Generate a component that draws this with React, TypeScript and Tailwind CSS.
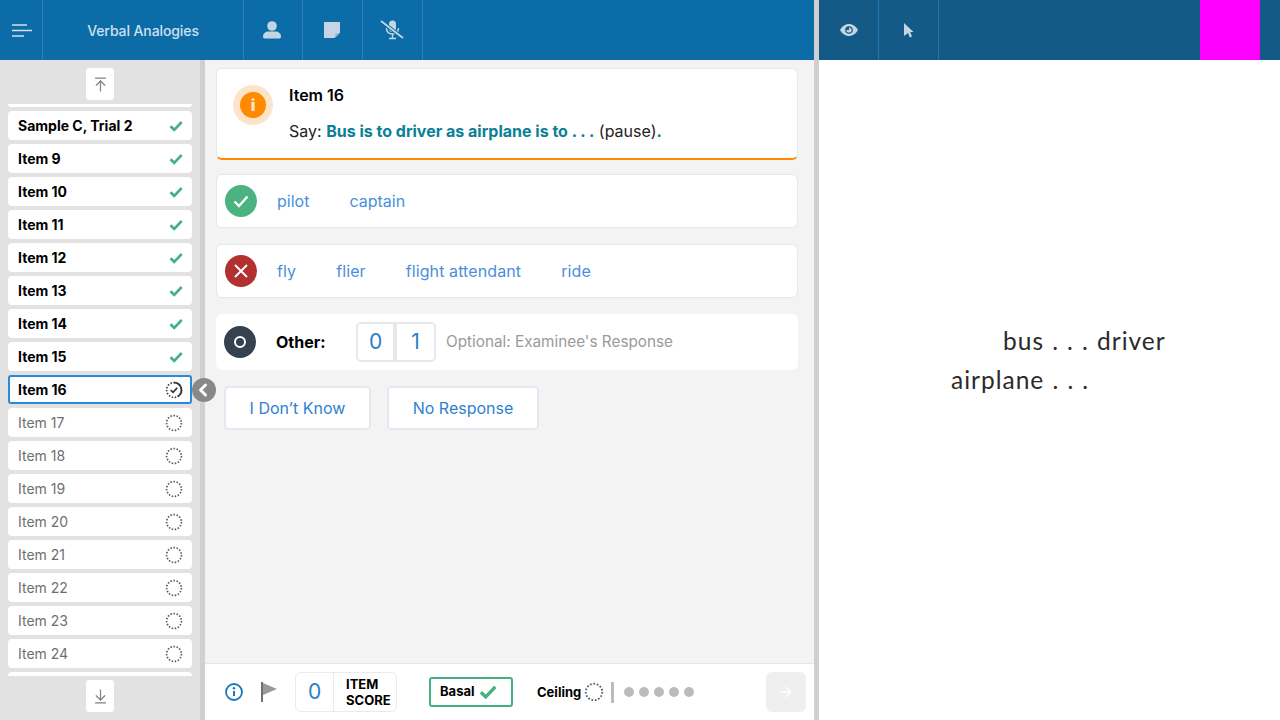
import { ChevronLeft, ArrowRight, ArrowUpToLine, ArrowDownToLine } from 'lucide-react';

const doneItems = ['Sample C, Trial 2', 'Item 9', 'Item 10', 'Item 11', 'Item 12', 'Item 13', 'Item 14', 'Item 15'];
const pendingItems = ['Item 17', 'Item 18', 'Item 19', 'Item 20', 'Item 21', 'Item 22', 'Item 23', 'Item 24'];
const wrongAnswers = ['fly', 'flier', 'flight attendant', 'ride'];

function DottedRing({ size = 18 }: { size?: number }) {
  return (
    <svg width={size} height={size} viewBox="0 0 18 18" fill="none">
      <circle cx="9" cy="9" r="7.4" stroke="#5c5c5c" strokeWidth="1.7" strokeDasharray="1.5 1.6" />
    </svg>
  );
}

function CurrentRing() {
  return (
    <svg width="18" height="18" viewBox="0 0 18 18" fill="none">
      <circle cx="9" cy="9" r="7.4" stroke="#444" strokeWidth="1.7" strokeDasharray="1.5 1.6" />
      <path d="M9 1.600A7.400 7.400 0 0 1 12.700 15.400" stroke="#333" strokeWidth="1.700" />
      <path d="M5.600 9l2.400 2.300 4.200-4.400" stroke="#333" strokeWidth="1.700" />
    </svg>
  );
}

function CheckMark({ size = 14 }: { size?: number }) {
  return (
    <svg width={size} height={size} viewBox="0 0 14 14" fill="none">
      <path d="M1.500 7.200l3.700 3.600L12.700 3" stroke="#45b080" strokeWidth="2.600" />
    </svg>
  );
}

function HeaderCell({ children, className }: { children: React.ReactNode; className: string }) {
  return <div className={`flex h-full items-center justify-center border-r border-[#2f7fb5] ${className}`}>{children}</div>;
}

function Row({ label, children, muted }: { label: string; children: React.ReactNode; muted?: boolean }) {
  return (
    <div className="flex h-[29px] shrink-0 items-center justify-between rounded-[4px] bg-white pl-[10px] pr-[9px]">
      <span className={`text-[14px] ${muted ? 'font-normal text-[#6f6f6f]' : 'font-bold text-black'}`}>{label}</span>
      {children}
    </div>
  );
}

export default function App() {
  return (
    <div className="flex h-[720px] w-[1280px] overflow-hidden bg-white font-['Inter',sans-serif]">
      <div className="flex w-[814px] shrink-0 flex-col">
        <header className="flex h-[60px] shrink-0 items-center bg-[#0b6ca8]">
          <HeaderCell className="w-[43px] pl-[2px]">
            <svg width="20" height="13" viewBox="0 0 20 13" fill="none" stroke="#cfe0ee" strokeWidth="1.500">
              <path d="M0 1h15M0 6.500h20M0 12h12" />
            </svg>
          </HeaderCell>
          <HeaderCell className="w-[201px]">
            <span className="text-[14px] font-medium tracking-[-0.1px] text-[#cfe0ee]">Verbal Analogies</span>
          </HeaderCell>
          <HeaderCell className="w-[59px] pr-[2px]">
            <svg width="18" height="18" viewBox="0 0 18 18" fill="#c5d5e4">
              <circle cx="9" cy="5" r="4.800" />
              <path d="M0 15.500c0-3.400 3-5 5.500-5h7c2.500 0 5.500 1.600 5.500 5 0 1.500-.8 2-2 2H2c-1.200 0-2-.5-2-2z" />
            </svg>
          </HeaderCell>
          <HeaderCell className="w-[60px] pr-[2px]">
            <svg width="16" height="16" viewBox="0 0 16 16">
              <path d="M0 0h16v10.500L10.500 16H0z" fill="#c5d5e4" />
              <path d="M11.500 15.500v-4h4z" fill="#8fb1cc" />
            </svg>
          </HeaderCell>
          <HeaderCell className="w-[60px] pr-[2px]">
            <svg width="24" height="20" viewBox="0 0 24 20" fill="none">
              <rect x="9" y="0.500" width="7" height="11.500" rx="3.500" fill="#c5d5e4" />
              <path d="M6.500 8c0 4 2.500 6 6 6s6-2 6-6" stroke="#c5d5e4" strokeWidth="1.400" />
              <path d="M12.500 14v4M9 18.500h7" stroke="#c5d5e4" strokeWidth="1.400" />
              <path d="M1 1l22 17" stroke="#0b6ca8" strokeWidth="3.600" />
              <path d="M1 1l22 17" stroke="#c5d5e4" strokeWidth="1.800" />
            </svg>
          </HeaderCell>
        </header>

        <div className="flex min-h-0 flex-1">
          <aside className="relative flex w-[205px] shrink-0 flex-col border-r-[5px] border-[#d0d0d0] bg-[#e2e2e2]">
            <div className="flex h-[44px] shrink-0 items-start justify-center pt-[8px]">
              <div className="flex h-[32px] w-[28px] items-center justify-center rounded-[3px] bg-white">
                <ArrowUpToLine size={17} strokeWidth={1.700} color="#808080" />
              </div>
            </div>
            <div className="mx-[8px] flex h-[572px] flex-col gap-[4px] overflow-hidden">
              <div className="h-[3px] shrink-0 rounded-b-[4px] bg-white" />
              {doneItems.map((item) => (
                <Row key={item} label={item}>
                  <CheckMark />
                </Row>
              ))}
              <div className="flex h-[29px] shrink-0 items-center justify-between rounded-[3px] border-2 border-[#2a8ad8] bg-white pl-[8px] pr-[7px]">
                <span className="text-[14px] font-bold text-black">Item 16</span>
                <CurrentRing />
              </div>
              {pendingItems.map((item) => (
                <Row key={item} label={item} muted>
                  <DottedRing />
                </Row>
              ))}
              <div className="h-[4px] shrink-0 rounded-t-[4px] bg-white" />
            </div>
            <div className="flex flex-1 items-start justify-center pt-[4px]">
              <div className="flex h-[32px] w-[28px] items-center justify-center rounded-[3px] bg-white">
                <ArrowDownToLine size={17} strokeWidth={1.700} color="#808080" />
              </div>
            </div>
            <div className="absolute left-[192px] top-[318px] flex h-[24px] w-[24px] items-center justify-center rounded-full bg-[#888888]">
              <ChevronLeft size={20} strokeWidth={3.500} color="#fff" className="-ml-[2px]" />
            </div>
          </aside>

          <main className="flex min-w-0 flex-1 flex-col bg-[#f3f3f3]">
            <div className="flex-1 pl-[11px] pr-[16px] pt-[8px]">
              <div className="flex h-[92px] rounded-[6px] border border-b-2 border-[#e4e8f0] border-b-[#ff8a00] bg-white pl-[16px] pt-[16px]">
                <div className="flex h-[40px] w-[40px] items-center justify-center rounded-full bg-[#fde3c8]">
                  <div className="flex h-[26px] w-[26px] items-center justify-center rounded-full bg-[#ff8a00] text-[16px] font-black text-[#fde3c8]">i</div>
                </div>
                <div className="ml-[16px] flex flex-col">
                  <div className="-mt-[2px] text-[16px] font-semibold leading-[24px] text-black">Item 16</div>
                  <div className="mt-[12px] text-[16px] leading-[24px] text-[#222]">
                    Say: <span className="font-bold text-[#0a8096]">Bus is to driver as airplane is to . . .</span> (pause)<span className="font-bold text-[#0a8096]">.</span>
                  </div>
                </div>
              </div>

              <div className="mt-[14px] flex h-[54px] items-center rounded-[6px] border border-[#e4e8f0] bg-white pl-[8px]">
                <div className="flex h-[32px] w-[32px] items-center justify-center rounded-full bg-[#4ab37f]">
                  <svg width="18" height="18" viewBox="0 0 18 18" fill="none">
                    <path d="M2.500 9.500l4.500 4.500 8.500-9.500" stroke="#fff" strokeWidth="2.400" />
                  </svg>
                </div>
                <div className="ml-[20px] flex gap-[40px] text-[16px] text-[#4a8fdc]">
                  <span>pilot</span>
                  <span>captain</span>
                </div>
              </div>

              <div className="mt-[16px] flex h-[54px] items-center rounded-[6px] border border-[#e4e8f0] bg-white pl-[8px]">
                <div className="flex h-[32px] w-[32px] items-center justify-center rounded-full bg-[#b33030]">
                  <svg width="16" height="16" viewBox="0 0 16 16" fill="none">
                    <path d="M2 2l12 12M14 2L2 14" stroke="#fff" strokeWidth="1.900" />
                  </svg>
                </div>
                <div className="ml-[20px] flex gap-[40px] text-[16px] tracking-[0.1px] text-[#4a8fdc]">
                  {wrongAnswers.map((answer) => (
                    <span key={answer}>{answer}</span>
                  ))}
                </div>
              </div>

              <div className="mt-[16px] flex h-[56px] items-center rounded-[6px] bg-white pl-[8px]">
                <div className="flex h-[32px] w-[32px] items-center justify-center rounded-full bg-[#36414f]">
                  <div className="h-[12px] w-[12px] rounded-full border-[2.500px] border-white" />
                </div>
                <span className="ml-[20px] w-[80px] text-[16px] font-bold text-black">Other:</span>
                <div className="flex h-[40px] w-[80px] rounded-[5px] border-2 border-[#e8e8e8] text-[21px] text-[#2a80c8]">
                  <span className="flex w-[39px] items-center justify-center border-r-[4px] border-[#e8e8e8]">0</span>
                  <span className="flex flex-1 items-center justify-center">1</span>
                </div>
                <span className="ml-[10px] text-[15.300px] text-[#9a9a9a]">Optional: Examinee's Response</span>
              </div>

              <div className="mt-[16px] flex gap-[16px] pl-[8px]">
                <button className="h-[44px] w-[147px] rounded-[5px] border-2 border-[#e4e8f0] bg-white text-[16px] text-[#2f80d0]">I Don’t Know</button>
                <button className="h-[44px] w-[152px] rounded-[5px] border-2 border-[#e4e8f0] bg-white text-[16px] text-[#2f80d0]">No Response</button>
              </div>
            </div>

            <footer className="flex h-[57px] shrink-0 items-center border-t border-[#e6e6e6] bg-white pl-[20px]">
              <svg width="18" height="18" viewBox="0 0 18 18" fill="none">
                <circle cx="9" cy="9" r="8" stroke="#1a78b8" strokeWidth="1.800" />
                <path d="M9 8v5" stroke="#1a78b8" strokeWidth="2" />
                <circle cx="9" cy="5.200" r="1.200" fill="#1a78b8" />
              </svg>
              <svg className="ml-[18px]" width="16" height="20" viewBox="0 0 16 20">
                <path d="M0 0h2v20H0z" fill="#707070" />
                <path d="M2 1l14 6-14 6z" fill="#9a9a9a" />
              </svg>
              <div className="ml-[18px] flex h-[40px] w-[102px] items-center rounded-[6px] border border-[#e8eaf2]">
                <span className="flex h-full w-[38px] items-center justify-center border-r border-[#e8eaf2] text-[21px] text-[#2a80c8]">0</span>
                <span className="ml-[12px] text-[13px] font-bold leading-[16px] text-black">ITEM<br />SCORE</span>
              </div>
              <div className="ml-[32px] flex h-[30px] w-[84px] items-center gap-[4px] rounded-[3px] border-2 border-[#45b080] pl-[9px]">
                <span className="text-[13px] font-bold text-black">Basal</span>
                <CheckMark size={18} />
              </div>
              <span className="ml-[24px] pt-[1px] text-[13px] font-bold text-black">Ceiling</span>
              <span className="ml-[3px]"><DottedRing size={20} /></span>
              <div className="ml-[7px] h-[21px] w-[3px] bg-[#bbbbbb]" />
              <div className="ml-[10px] flex gap-[5px]">
                {[0, 1, 2, 3, 4].map((dot) => (
                  <div key={dot} className="h-[10px] w-[10px] rounded-full bg-[#bbbbbb]" />
                ))}
              </div>
              <div className="ml-auto mr-[8px] flex h-[40px] w-[40px] items-center justify-center rounded-[6px] bg-[#efefef]">
                <ArrowRight size={16} strokeWidth={2} color="#fff" />
              </div>
            </footer>
          </main>
        </div>
      </div>

      <div className="w-[5px] shrink-0 bg-[#d0d0d0]" />

      <div className="flex min-w-0 flex-1 flex-col">
        <header className="flex h-[60px] shrink-0 items-center bg-[#135a87]">
          <div className="flex h-full w-[60px] items-center justify-center border-r border-[#1f7ab2]">
            <svg width="18" height="12" viewBox="0 0 18 12">
              <path d="M0 6c2-3.500 5.200-6 9-6s7 2.500 9 6c-2 3.500-5.200 6-9 6s-7-2.500-9-6z" fill="#c5d5e4" />
              <circle cx="9" cy="6" r="3.800" fill="#135a87" />
              <path d="M9 3.400A2.600 2.600 0 1 1 6.400 6H9z" fill="#c5d5e4" />
            </svg>
          </div>
          <div className="flex h-full w-[60px] items-center justify-center border-r border-[#1f7ab2]">
            <svg width="10" height="15" viewBox="0 0 10 15" fill="#c5d5e4">
              <path d="M0 0l9.500 9H6.300l1.700 4.400-2.200 1-1.700-4.400L0 13z" />
            </svg>
          </div>
          <div className="ml-auto mr-[20px] h-full w-[60px] bg-[#ff00ff]" />
        </header>
        <div className="flex-1 pt-[261px] font-['Lato',sans-serif] text-[24.500px] leading-[39px] tracking-[1px] text-[#2a2a2a] [word-spacing:0.900px]">
          <div className="pl-[184px]">bus . . . driver</div>
          <div className="pl-[132px]">airplane . . .</div>
        </div>
      </div>
    </div>
  );
}
